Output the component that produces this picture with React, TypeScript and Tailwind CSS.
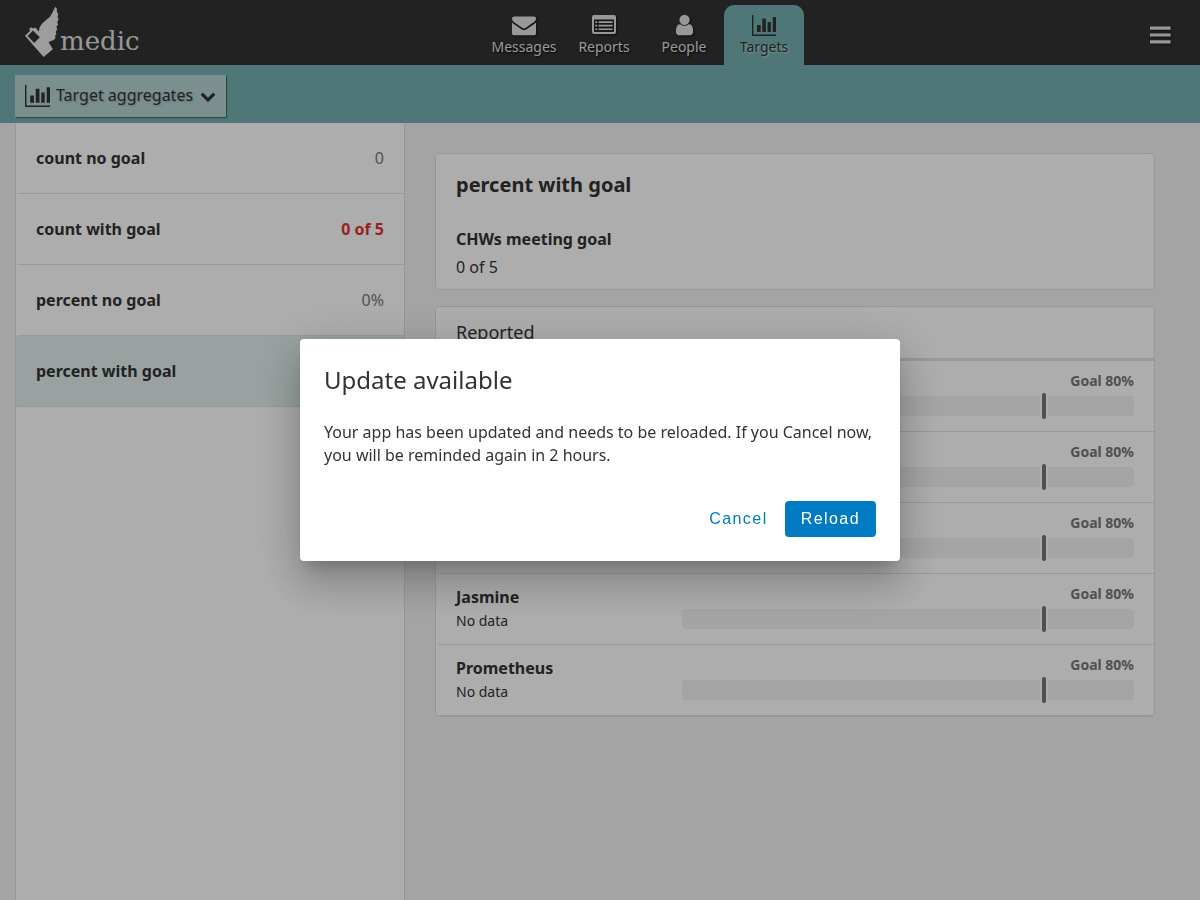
import React from 'react';

const iconShadow = '[filter:drop-shadow(1px_1px_1px_rgba(0,0,0,0.6))]';

function LogoMark() {
  return (
    <svg width="36" height="52" viewBox="0 0 36 52" className="shrink-0" aria-hidden="true">
      <path
        fill="#e8e8e8"
        d="M31.2 0.8 L33 3 L32.8 5.5 L34.2 8 L33.6 11 L34.6 13.5 L33.2 16 L34 18.5 L32.4 21 L33.2 23.5 L31.8 25.5 L32.4 28 L31 30 L31.6 32 L29.8 34 L24.5 36 L28.8 43.2 L19.6 51 L1 29.8 L6 25 L5.2 23 L7.2 21.2 L9 22.6 L11.5 21.6 L14.8 25.8 L15.6 21.5 L17.7 18 L21.5 14.5 L26 10.7 L29 5.5 Z"
      />
      <path fill="#333333" d="M9 24.6 L15.8 31.2 L10.2 36.9 L3.6 30 Z" />
    </svg>
  );
}

function EnvelopeIcon() {
  return (
    <svg width="24" height="24" viewBox="0 0 1792 1792" fill="currentColor" aria-hidden="true">
      <path d="M1792 710v794q0 66-47 113t-113 47h-1472q-66 0-113-47t-47-113v-794q44 49 101 87 362 246 497 345 57 42 92.5 65.5t94.5 48 110 24.5h2q51 0 110-24.5t94.5-48 92.5-65.5q170-123 498-345 57-39 100-87zm0-294q0 79-49 151t-122 123q-376 261-468 325-10 7-42.5 31t-54 38.5-52 32.5-57.5 27-50 9h-2q-23 0-50-9t-57.5-27-52-32.5-54-38.5-42.5-31q-91-64-262-182.5t-205-142.5q-62-42-117-115.5t-55-136.5q0-78 41.5-130t118.5-52h1472q65 0 112.5 47t47.5 113z" />
    </svg>
  );
}

function ListIcon() {
  return (
    <svg width="24" height="24" viewBox="0 0 24 24" fill="currentColor" aria-hidden="true">
      <path
        fillRule="evenodd"
        d="M2 2H22A2 2 0 0 1 24 4V19A2 2 0 0 1 22 21H2A2 2 0 0 1 0 19V4A2 2 0 0 1 2 2ZM2 7V18.6Q2 19 2.4 19H21.6Q22 19 22 18.6V7Q22 6.6 21.6 6.6H2.4Q2 6.6 2 7Z"
      />
      <path d="M3.3 8.2h1.8v1.7H3.3zM3.3 11.8h1.8v1.7H3.3zM3.3 15.4h1.8v1.7H3.3zM6.6 8.2h14v1.7h-14zM6.6 11.8h14v1.7h-14zM6.6 15.4h14v1.7h-14z" />
    </svg>
  );
}

function PersonIcon() {
  return (
    <svg width="24" height="24" viewBox="-40 0 1792 1792" fill="currentColor" aria-hidden="true">
      <path d="M1536 1399q0 109-62.5 187t-150.5 78h-854q-88 0-150.5-78t-62.5-187q0-85 8.5-160.5t31.5-152 58.5-131 94-89 134.5-34.5q131 128 313 128t313-128q76 0 134.5 34.5t94 89 58.5 131 31.5 152 8.5 160.5zm-256-887q0 159-112.5 271.5t-271.5 112.5-271.5-112.5-112.5-271.5 112.5-271.5 271.5-112.5 271.5 112.5 112.5 271.5z" />
    </svg>
  );
}

function ChartIcon({ size }: { size: number }) {
  return (
    <svg width={size} height={size} viewBox="0 0 24 24" fill="currentColor" aria-hidden="true">
      <path d="M0 2h1.4v19.6H24V23H0zM5 12h3.6v7H5zM10.3 5.6h3.6V19h-3.6zM15.6 9h3.3v10h-3.3zM20.8 4H24v15h-3.2z" />
    </svg>
  );
}

function ChevronIcon() {
  return (
    <svg width="16" height="16" viewBox="0 0 1792 1792" fill="currentColor" className="mt-0.5" aria-hidden="true">
      <path d="M1683 808l-742 741q-19 19-45 19t-45-19l-742-741q-19-19-19-45.5t19-45.5l166-165q19-19 45-19t45 19l531 531 531-531q19-19 45-19t45 19l166 165q19 19 19 45.5t-19 45.5z" />
    </svg>
  );
}

const tabs = [
  { label: 'Messages', icon: <EnvelopeIcon /> },
  { label: 'Reports', icon: <ListIcon /> },
  { label: 'People', icon: <PersonIcon /> },
  { label: 'Targets', icon: <ChartIcon size={24} />, active: true },
];

const targets = [
  { name: 'count no goal', value: '0' },
  { name: 'count with goal', value: '0 of 5', missed: true },
  { name: 'percent no goal', value: '0%' },
  { name: 'percent with goal', value: '', selected: true },
];

const reported = [
  { id: 1, name: '' },
  { id: 2, name: '' },
  { id: 3, name: '' },
  { id: 4, name: 'Jasmine' },
  { id: 5, name: 'Prometheus' },
];

function Header() {
  return (
    <header className="flex h-[65px] shrink-0 bg-[#333333] text-[#e0e0e0]">
      <a href="#home" aria-label="medic home" className="flex w-[168px] items-start pl-6 pt-1.5">
        <LogoMark />
        <span className="pt-[18px] font-['DejaVu_Serif',serif] text-[26px] leading-[34px]">medic</span>
      </a>
      <nav className="flex flex-1 justify-center pt-[5px]">
        {tabs.map((tab) => (
          <a
            key={tab.label}
            href={`#${tab.label.toLowerCase()}`}
            className={
              tab.active
                ? 'flex w-20 flex-col items-center rounded-t-[10px] bg-[#76b0b0] pt-2 text-[#333333] [text-shadow:1px_1px_2px_rgba(255,255,255,0.5)]'
                : 'flex w-20 flex-col items-center pt-2 [text-shadow:1px_1px_2px_#000]'
            }
          >
            <span className={tab.active ? 'h-6' : 'h-6 ' + iconShadow}>{tab.icon}</span>
            <span className="text-sm leading-5">{tab.label}</span>
          </a>
        ))}
      </nav>
      <button type="button" aria-label="Menu" className="flex w-20 items-center justify-center pt-[5px]">
        <svg width="21" height="18" viewBox="0 0 21 18" fill="currentColor" className={iconShadow} aria-hidden="true">
          <path d="M0 0.5h20.6v3.2h-20.6zM0 7.4h20.6v3.2h-20.6zM0 14.3h20.6v3.2h-20.6z" />
        </svg>
      </button>
    </header>
  );
}

function TargetList() {
  return (
    <ul className="w-1/3 border-x border-[#e0e0e0] bg-white">
      {targets.map((t) => (
        <li key={t.name}>
          <a
            href="#target"
            className={
              'flex h-[71px] items-center justify-between border-b border-l-4 border-b-[#e0e0e0] pl-4 pr-5 ' +
              (t.selected ? 'border-l-[#e2efed] bg-[#e2efed]' : 'border-l-transparent')
            }
          >
            <span className="font-bold">{t.name}</span>
            <span className={t.missed ? 'font-bold text-[#e33030]' : 'text-[#777777]'}>{t.value}</span>
          </a>
        </li>
      ))}
    </ul>
  );
}

function GoalBar() {
  return (
    <div className="relative h-5 rounded bg-[#f2f2f2]">
      <div className="absolute -top-[3px] left-[80%] h-[26px] w-2 -translate-x-1/2 bg-white px-0.5">
        <div className="h-full rounded-sm bg-[#777777]" />
      </div>
    </div>
  );
}

function Detail() {
  return (
    <main className="flex flex-1 flex-col gap-4 p-[30px]">
      <section className="rounded border border-[#e0e0e0] bg-white px-5 pb-2.5 pt-[17px]">
        <h1 className="text-xl font-bold leading-7">percent with goal</h1>
        <h2 className="mt-7 font-bold leading-6">CHWs meeting goal</h2>
        <p className="mt-1 leading-6">0 of 5</p>
      </section>
      <section className="rounded border border-[#e0e0e0] bg-white">
        <h2 className="border-b-3 border-[#e0e0e0] px-5 py-3 text-lg leading-[27px]">Reported</h2>
        <ul>
          {reported.map((r) => (
            <li
              key={r.id}
              className="flex h-[71px] border-b border-l-4 border-b-[#e0e0e0] border-l-transparent pl-4 pr-5"
            >
              <div className="w-1/3 pt-[11px]">
                <div className="h-6 font-bold leading-6">{r.name}</div>
                <div className="text-sm leading-6">No data</div>
              </div>
              <div className="w-2/3 pt-2.5">
                <div className="mb-[5px] text-right text-sm font-bold leading-5 text-[#777777]">Goal 80%</div>
                <GoalBar />
              </div>
            </li>
          ))}
        </ul>
      </section>
    </main>
  );
}

function UpdateDialog() {
  return (
    <div className="fixed inset-0 flex items-center justify-center bg-black/32">
      <div
        role="dialog"
        aria-modal="true"
        aria-labelledby="update-title"
        className="w-full max-w-[600px] rounded bg-white p-6 shadow-[0_11px_15px_-7px_rgba(0,0,0,0.2),0_24px_38px_3px_rgba(0,0,0,0.14),0_9px_46px_8px_rgba(0,0,0,0.12)]"
      >
        <h2 id="update-title" className="text-2xl leading-[34px]">
          Update available
        </h2>
        <p className="mt-6 leading-[23px]">
          Your app has been updated and needs to be reloaded. If you Cancel now, you will be reminded again in 2 hours.
        </p>
        <div className="mt-[34px] flex justify-end gap-px font-['Liberation_Sans',sans-serif] tracking-[0.09em]">
          <button type="button" className="h-9 rounded px-4 text-[#007ac0]">
            Cancel
          </button>
          <button type="button" className="h-9 rounded bg-[#007ac0] px-4 text-white">
            Reload
          </button>
        </div>
      </div>
    </div>
  );
}

export default function App() {
  return (
    <div className="flex min-h-screen flex-col bg-[#f2f2f2] font-['Noto_Sans',sans-serif] text-base text-[#333333]">
      <Header />
      <div className="flex h-[58px] shrink-0 items-start bg-[#76b0b0] px-[15px] pt-2.5">
        <button
          type="button"
          className="flex h-[42px] items-center bg-[#b5d3d3] px-2.5 pb-0.5 shadow-[1px_1px_1px_rgba(0,0,0,0.4)] [text-shadow:1px_1px_2px_rgba(0,0,0,0.2)]"
        >
          <ChartIcon size={25} />
          <span className="ml-1.5 mr-[7px] leading-6">Target aggregates</span>
          <ChevronIcon />
        </button>
      </div>
      <div className="flex flex-1 px-[15px]">
        <TargetList />
        <Detail />
      </div>
      <UpdateDialog />
    </div>
  );
}
